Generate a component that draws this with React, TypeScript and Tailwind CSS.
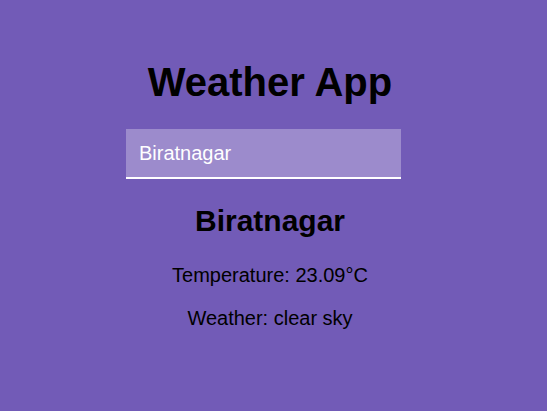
import { useState } from "react";

export default function App() {
  const [city, setCity] = useState("Biratnagar");

  return (
    <div className="min-h-[411px] w-full bg-[#725bb7] font-['Liberation_Sans',Arial,sans-serif] text-black">
      <div className="flex flex-col items-center pt-[59px] pr-[7px]">
        <h1 className="text-[40px] leading-[46px] font-bold">Weather App</h1>
        <input
          value={city}
          onChange={(e) => setCity(e.target.value)}
          className="mt-[24px] mr-[13px] h-[50px] w-[275px] bg-[#9c8bcc] border-b-2 border-white px-[13px] text-[20px] text-white outline-none"
        />
        <h2 className="mt-[25px] text-[30px] leading-[34px] font-bold">Biratnagar</h2>
        <p className="mt-[26px] text-[20px] leading-[23px]">Temperature: 23.09°C</p>
        <p className="mt-[20px] text-[20px] leading-[23px]">Weather: clear sky</p>
      </div>
    </div>
  );
}
